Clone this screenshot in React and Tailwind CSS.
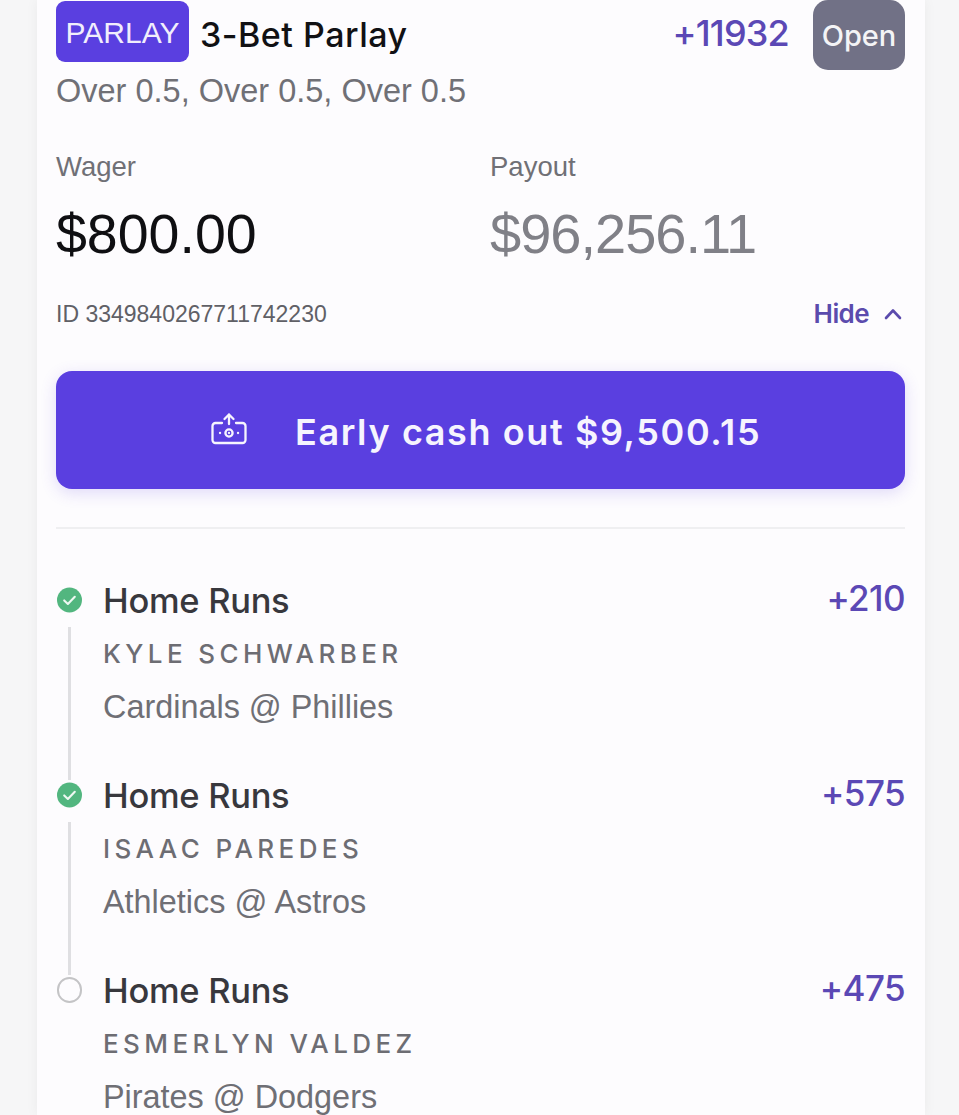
import React from "react";

const inter = "font-['Inter','Liberation_Sans',sans-serif]";
const arial = "font-['Liberation_Sans','Arial',sans-serif]";

const CashOutIcon = () => (
  <svg className="-mt-[2px] shrink-0" width="36" height="34" viewBox="0 0 36 34" fill="none" stroke="currentColor" strokeWidth="2.3" strokeLinecap="round" strokeLinejoin="round">
    <path d="M11 11H4.5a3 3 0 0 0-3 3v14a3 3 0 0 0 3 3h27a3 3 0 0 0 3-3V14a3 3 0 0 0-3-3H25" />
    <path d="M18 12V2.5M13.5 7l4.5-4.5L22.500 7" />
    <circle cx="18" cy="21" r="3.6" />
    <path d="M18 21h.01M9 21h.1M27 21h.1" />
  </svg>
);

const Leg = ({ odds, player, game, done, last }) => (
  <div className="flex h-[195px]">
    <div className="flex w-[47px] flex-col items-start">
      <div className="flex w-[26px] justify-center pl-[1px]">
        {done ? (
          <svg width="26" height="26" viewBox="0 0 26 26">
            <circle cx="13" cy="13" r="13" fill="#52b67f" />
            <path d="M7.500 13.500l3.800 3.600 7.200-7.400" fill="none" stroke="#eef8f2" strokeWidth="2.2" strokeLinecap="round" strokeLinejoin="round" />
          </svg>
        ) : (
          <div className="h-[26px] w-[26px] rounded-full border-2 border-[#c4c4c6]" />
        )}
      </div>
      {!last && <div className="mb-[2px] ml-[12px] mt-[14px] w-[3px] flex-1 bg-[#dfdfe2]" />}
    </div>
    <div className="-mt-[6px] flex-1">
      <div className="flex items-start justify-between">
        <div className={`text-[34.5px] leading-[40px] font-medium tracking-[-0.3px] text-[#38383d] ${inter}`}>Home Runs</div>
        <div className={`-mt-[3px] text-[35px] leading-[40px] font-medium tracking-[-0.6px] text-[#5b48b5] ${inter}`}>{odds}</div>
      </div>
      <div className={`mt-[18px] text-[26px] leading-[30px] font-medium tracking-[4.4px] text-[#6d6d73] ${inter}`}>{player}</div>
      <div className={`mt-[20px] text-[32.4px] leading-[36px] text-[#6f6f75] ${arial}`}>{game}</div>
    </div>
  </div>
);

export default function App() {
  return (
    <div className={`h-[1115px] overflow-hidden bg-[#f6f6f7] ${arial}`}>
      <div className="ml-[37px] h-full w-[888px] bg-[#fdfcfe] pl-[19px] pr-[20px] pt-[1px] shadow-[0_0_12px_rgba(0,0,0,0.05)]">
        <div className="flex h-[68px] items-start justify-between">
          <div className="flex items-center">
            <span className="flex h-[61px] w-[133px] items-center justify-center rounded-[9px] bg-[#5a3fe0] pt-[2px] text-[30px] text-[#f1eefc]">PARLAY</span>
            <span className={`ml-[11px] mt-[5px] text-[34px] font-medium tracking-[0.5px] text-[#111114] ${inter}`}>3-Bet Parlay</span>
          </div>
          <div className="flex items-start">
            <span className={`mt-[12px] text-[36px] leading-[40px] font-medium tracking-[-0.8px] text-[#5b48b5] ${inter}`}>+11932</span>
            <span className={`-mt-[1px] ml-[24px] flex h-[70px] w-[92px] items-center justify-center rounded-[15px] bg-[#717186] pt-[2px] text-[29px] font-medium text-[#f4f4f6] ${inter}`}>Open</span>
          </div>
        </div>
        <div className="mt-[3px] text-[32.5px] leading-[38px] text-[#707076]">Over 0.5, Over 0.5, Over 0.5</div>

        <div className="mt-[40px] flex">
          <div className="w-[434px]">
            <div className="text-[27.5px] leading-[34px] text-[#707076]">Wager</div>
            <div className="mt-[20px] text-[55.5px] leading-[60px] text-[#0f0f12]">$800.00</div>
          </div>
          <div>
            <div className="text-[27.5px] leading-[34px] text-[#707076]">Payout</div>
            <div className="mt-[20px] text-[56px] leading-[60px] tracking-[-1px] text-[#808087]">$96,256.11</div>
          </div>
        </div>

        <div className="mt-[35px] flex items-center justify-between">
          <span className="text-[23px] leading-[30px] text-[#606066]">ID 3349840267711742230</span>
          <span className={`flex items-center text-[26px] leading-[30px] font-semibold tracking-[-0.6px] text-[#5b4bad] ${inter}`}>
            Hide
            <svg className="mr-[3px] ml-[15px]" width="18" height="12" viewBox="0 0 18 12" fill="none" stroke="currentColor" strokeWidth="2.6" strokeLinecap="round" strokeLinejoin="round">
              <path d="M2 10l7-7.500 7 7.500" />
            </svg>
          </span>
        </div>

        <button className="mt-[42px] flex h-[118px] w-full items-center justify-start rounded-[16px] bg-[#5a3fe0] pl-[155px] text-[#f6f4fe] shadow-[0_4px_16px_rgba(90,63,224,0.18)]">
          <CashOutIcon />
          <span className={`ml-[48px] mt-[4px] text-[36px] font-semibold tracking-[1.6px] ${inter}`}>Early cash out $9,500.15</span>
        </button>

        <div className="mt-[38px] h-[2px] bg-[#efeff1]" />

        <div className="mt-[58px]">
          <Leg done odds="+210" player="KYLE SCHWARBER" game="Cardinals @ Phillies" />
          <Leg done odds="+575" player="ISAAC PAREDES" game="Athletics @ Astros" />
          <Leg last odds="+475" player="ESMERLYN VALDEZ" game="Pirates @ Dodgers" />
        </div>
      </div>
    </div>
  );
}
